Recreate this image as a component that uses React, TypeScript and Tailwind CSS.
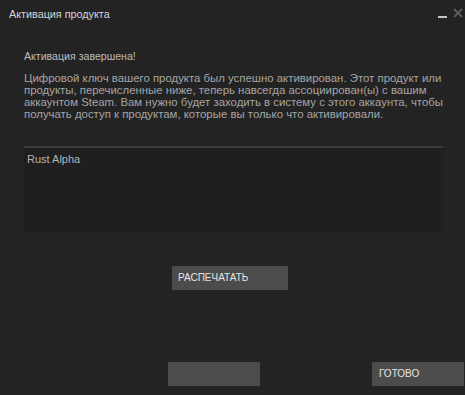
export default function App() {
  return (
    <div
      className="w-[465px] h-[395px] bg-[#232323] flex flex-col text-[12px] leading-[12px]"
      style={{ fontFamily: '"Liberation Sans", Arial, sans-serif' }}
    >
      {/* Title bar */}
      <div className="flex items-start h-[40px]">
        <div className="pl-[9px] pt-[8px] text-[10.8px] text-[#d6d6d6]">Активация продукта</div>
        <div className="ml-auto flex items-start pr-[2px] pt-[8px] gap-[6px]">
          <div className="w-[9px] h-[2px] bg-[#c4c4c4] mt-[8px]" />
          <svg width="10" height="10" viewBox="0 0 10 10" className="text-[#5a5a5a]">
            <path d="M1 1 L9 9 M9 1 L1 9" stroke="currentColor" strokeWidth="2" />
          </svg>
        </div>
      </div>

      <div className="px-[24px] pt-[10px]">
        <div className="text-[10.6px] text-[#bdbdbd]">Активация завершена!</div>
        <p className="mt-[10px] text-[11.4px] text-[#a5a5a5] leading-[12px] whitespace-nowrap">
          Цифровой ключ вашего продукта был успешно активирован. Этот продукт или
          <br />
          продукты, перечисленные ниже, теперь навсегда ассоциирован(ы) с вашим
          <br />
          аккаунтом Steam. Вам нужно будет заходить в систему с этого аккаунта, чтобы
          <br />
          получать доступ к продуктам, которые вы только что активировали.
        </p>

        <div className="mt-[26px] w-[419px] h-[86px] bg-[#1f1f1f] border-t-2 border-[#3d3d3d]">
          <div className="pl-[3px] pt-[5px] text-[11px] text-[#b4b4b4]">Rust Alpha</div>
        </div>
      </div>

      <div className="flex pl-[172px] mt-[34px]">
        <button className="w-[116px] h-[24px] bg-[#4c4c4c] text-[#e6e6e6] text-left pl-[6px] text-[10px]">
          РАСПЕЧАТАТЬ
        </button>
      </div>

      <div className="flex mt-auto mb-[9px] pl-[168px] gap-[112px]">
        <div className="w-[92px] h-[24px] bg-[#4c4c4c]" />
        <button className="w-[92px] h-[24px] bg-[#4c4c4c] text-[#e6e6e6] text-left pl-[7px] text-[10px]">
          ГОТОВО
        </button>
      </div>
    </div>
  )
}
